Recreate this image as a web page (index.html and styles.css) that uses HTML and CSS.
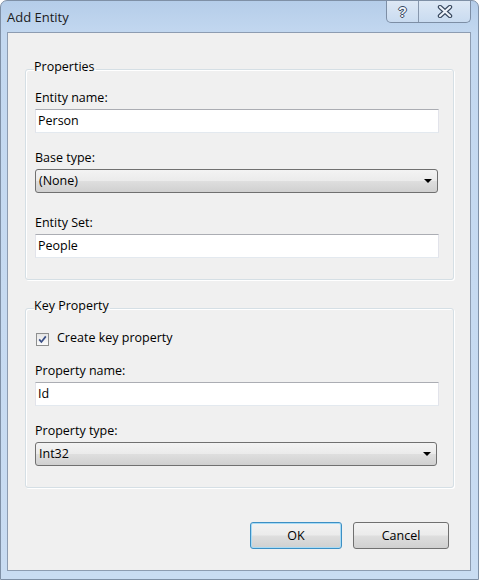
FILE: index.html
```html
<!DOCTYPE html>
<html><head>
<meta charset="utf-8"><title>Add Entity</title>
<link rel="stylesheet" href="styles.css">
</head>
<body>
<div class="window">
<div class="titlebar">
<span class="title">Add Entity</span>
<div class="caption-btns">
<span class="cap-btn cap-help">?</span>
<span class="cap-btn cap-close">
<svg width="16" height="13" viewBox="0 0 16 13"><path d="M3 2 L13 11 M13 2 L3 11" stroke="#3a4a60" stroke-width="4.4" stroke-linecap="round" fill="none"/><path d="M3 2 L13 11 M13 2 L3 11" stroke="#eef3fa" stroke-width="2.2" stroke-linecap="round" fill="none"/></svg>
</span>
</div>
</div>
<div class="client">
<fieldset class="group group-props">
<legend>Properties</legend>
<div class="field-label">Entity name:</div>
<div class="textbox">Person</div>
<div class="field-label">Base type:</div>
<div class="combo combo-mid"><span>(None)</span><span class="arrow"></span></div>
<div class="field-label">Entity Set:</div>
<div class="textbox textbox-last">People</div>
</fieldset>
<fieldset class="group group-key">
<legend>Key Property</legend>
<div class="check-row">
<span class="checkbox"><svg width="11" height="11" viewBox="0 0 11 11"><path d="M2.2 5.4 L4.4 8 L8.8 2.4" stroke="#3a4f86" stroke-width="1.7" fill="none"/></svg></span>
<span>Create key property</span>
</div>
<div class="field-label">Property name:</div>
<div class="textbox">Id</div>
<div class="field-label">Property type:</div>
<div class="combo combo-last"><span>Int32</span><span class="arrow"></span></div>
</fieldset>
<div class="buttons">
<span class="btn btn-ok">OK</span>
<span class="btn btn-cancel">Cancel</span>
</div>
</div>
</div>
</body></html>
```
FILE: styles.css
```css
body {
margin: 0;
font-family: "Open Sans", "Noto Sans", sans-serif;
font-size: 12.5px;
color: #000;
background-color: #fff;
}
.window {
width: 479px;
height: 580px;
box-sizing: border-box;
border: 1px solid #7f90a6;
border-radius: 7px 7px 0 0;
background: linear-gradient(#b5cde9, #c3d8f0 34px, #c9dcf2);
display: flex;
flex-direction: column;
overflow: hidden;
}
.titlebar {
height: 31px;
flex: none;
display: flex;
justify-content: space-between;
align-items: flex-start;
padding: 0 7px 0 6px;
}
.title {
font-size: 13px;
line-height: 16px;
padding-top: 8px;
color: #1b1b1b;
}
.caption-btns {
display: flex;
height: 21px;
border: 1px solid #7d8ea5;
border-top: none;
border-radius: 0 0 5px 5px;
background: linear-gradient(#dde8f5, #c9dbf0);
overflow: hidden;
}
.cap-btn {
display: flex;
align-items: center;
justify-content: center;
height: 21px;
}
.cap-help {
width: 31px;
border-right: 1px solid #8797ad;
font-family: "Liberation Sans", sans-serif;
font-weight: bold;
font-size: 14px;
color: #eef3fa;
text-shadow: 1px 0 #3a4a60, -1px 0 #3a4a60, 0 1px #3a4a60, 0 -1px #3a4a60;
}
.cap-close {
width: 51px;
}
.client {
height: 539px;
box-sizing: border-box;
margin: 0 7px 0 6px;
border: 1px solid #8d9cb1;
background-color: #f0f0f0;
}
.group {
margin: 0 16px 0 17px;
border: 1px solid #d5dfe5;
border-radius: 3px;
box-shadow: 1px 1px 0 #fff, inset 1px 1px 0 #fff;
padding: 10px 14px 21px 9px;
min-width: 0;
}
.group-props {
margin-top: 26px;
}
.group-key {
margin-top: 18px;
padding-top: 11px;
padding-bottom: 21px;
}
.group legend {
padding: 0 1px 5px 0;
margin-left: -1px;
line-height: 16px;
}
.field-label {
line-height: 16px;
margin-bottom: 3px;
}
.textbox {
height: 24px;
box-sizing: border-box;
border: 1px solid #e2e3ea;
border-top-color: #abadb3;
border-bottom-color: #e3e9ef;
background-color: #fff;
padding-left: 2px;
line-height: 21px;
margin-bottom: 17px;
}
.textbox-last {
margin-bottom: 0;
}
.combo {
height: 24px;
box-sizing: border-box;
margin-top: 2px;
border: 1px solid #707070;
border-radius: 3px;
background: linear-gradient(#f3f3f3, #ebebeb 48%, #dedede 52%, #d0d0d0);
display: flex;
justify-content: space-between;
align-items: center;
padding: 0 5px 0 3px;
line-height: 20px;
}
.combo-mid {
width: 403px;
margin-bottom: 22px;
}
.combo-last {
width: 402px;
}
.arrow {
width: 0;
height: 0;
border-left: 4px solid transparent;
border-right: 4px solid transparent;
border-top: 4px solid #000;
}
.check-row {
display: flex;
align-items: flex-start;
line-height: 16px;
margin-bottom: 17px;
}
.checkbox {
width: 13px;
height: 13px;
box-sizing: border-box;
margin: 3px 8px 0 1px;
border: 1px solid #8e8f8f;
background: linear-gradient(#e6e6e6, #fbfbfb);
display: flex;
align-items: center;
justify-content: center;
}
.buttons {
display: flex;
justify-content: flex-end;
gap: 11px;
margin-top: 34px;
padding-right: 21px;
}
.btn {
height: 27px;
box-sizing: border-box;
border: 1px solid #707070;
border-radius: 3px;
background: linear-gradient(#f3f3f3, #ebebeb 48%, #dedede 52%, #d0d0d0);
display: flex;
align-items: center;
justify-content: center;
}
.btn-ok {
width: 92px;
border-color: #3c8fc4;
box-shadow: inset 0 0 0 1px #a8dbf5;
}
.btn-cancel {
width: 96px;
}
```
